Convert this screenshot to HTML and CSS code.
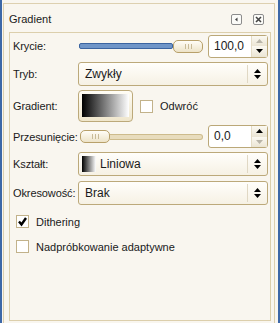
FILE: index.html
```html
<!DOCTYPE html>
<html lang="pl">
<head>
    <meta charset="UTF-8">
    <title>Gradient</title>
    <link rel="stylesheet" href="styles.css">
</head>
<body>
    <div class="window">
        <div class="dock">
            <div class="title-bar">
                <span class="title">Gradient</span>
                <span class="tab-btn">
                    <svg width="9" height="9" viewBox="0 0 9 9"><path d="M5.5 2.5 L3 4.5 L5.5 6.5 Z" fill="#444"/></svg>
                </span>
                <span class="tab-btn">
                    <svg width="9" height="9" viewBox="0 0 9 9"><path d="M2 2 L7 7 M7 2 L2 7" stroke="#444" stroke-width="1.6"/></svg>
                </span>
            </div>

            <div class="panel">
                <div class="row row-krycie">
                    <span class="label">Krycie:</span>
                    <div class="slider">
                        <div class="track blue"></div>
                        <div class="thumb"><span class="grip"></span></div>
                    </div>
                    <div class="spin">
                        <span class="spin-value">100,0</span>
                        <div class="spin-btns">
                            <span class="spin-btn off"><svg width="7" height="4" viewBox="0 0 7 4"><path d="M0 4 L3.5 0 L7 4 Z"/></svg></span>
                            <span class="spin-btn on"><svg width="7" height="4" viewBox="0 0 7 4"><path d="M0 0 L7 0 L3.5 4 Z"/></svg></span>
                        </div>
                    </div>
                </div>

                <div class="row row-tryb">
                    <span class="label">Tryb:</span>
                    <div class="combo">
                        <span class="combo-text">Zwykły</span>
                        <span class="combo-arrows">
                            <svg width="7" height="10" viewBox="0 0 7 10"><path d="M0 4 L3.5 0 L7 4 Z M0 6 L7 6 L3.5 10 Z"/></svg>
                        </span>
                    </div>
                </div>

                <div class="row row-gradient">
                    <span class="label">Gradient:</span>
                    <div class="preview"><div class="preview-fill"></div></div>
                    <span class="check"></span>
                    <span class="check-label">Odwróć</span>
                </div>

                <div class="row row-przes">
                    <span class="label">Przesunięcie:</span>
                    <div class="slider">
                        <div class="thumb left"><span class="grip"></span></div>
                        <div class="track tan"></div>
                    </div>
                    <div class="spin">
                        <span class="spin-value">0,0</span>
                        <div class="spin-btns">
                            <span class="spin-btn on"><svg width="7" height="4" viewBox="0 0 7 4"><path d="M0 4 L3.5 0 L7 4 Z"/></svg></span>
                            <span class="spin-btn off"><svg width="7" height="4" viewBox="0 0 7 4"><path d="M0 0 L7 0 L3.5 4 Z"/></svg></span>
                        </div>
                    </div>
                </div>

                <div class="row row-ksztalt">
                    <span class="label">Kształt:</span>
                    <div class="combo">
                        <span class="shape-icon"></span>
                        <span class="combo-text near">Liniowa</span>
                        <span class="combo-arrows">
                            <svg width="7" height="10" viewBox="0 0 7 10"><path d="M0 4 L3.5 0 L7 4 Z M0 6 L7 6 L3.5 10 Z"/></svg>
                        </span>
                    </div>
                </div>

                <div class="row row-okres">
                    <span class="label">Okresowość:</span>
                    <div class="combo">
                        <span class="combo-text">Brak</span>
                        <span class="combo-arrows">
                            <svg width="7" height="10" viewBox="0 0 7 10"><path d="M0 4 L3.5 0 L7 4 Z M0 6 L7 6 L3.5 10 Z"/></svg>
                        </span>
                    </div>
                </div>

                <div class="opt opt-dither">
                    <span class="check">
                        <svg width="11" height="11" viewBox="0 0 11 11"><path d="M2 5.5 L4.5 8.5 L9 2" stroke="#000" stroke-width="2.4" fill="none"/></svg>
                    </span>
                    <span class="check-label">Dithering</span>
                </div>

                <div class="opt opt-adapt">
                    <span class="check"></span>
                    <span class="check-label">Nadpróbkowanie adaptywne</span>
                </div>
            </div>
        </div>
    </div>
</body>
</html>
```

FILE: styles.css
```css
body {
    margin: 0;
    font-family: "Liberation Sans", Arial, sans-serif;
    font-size: 11px;
    color: #1a1a1a;
    background-color: #f9f6ef;
}
.window {
    height: 323px;
    border-left: 2px solid #3d68a8;
    border-right: 2px solid #3d68a8;
    padding: 3px 3px 0 1px;
    box-sizing: border-box;
    overflow: hidden;
}
.dock {
    border: 1px solid #ddd0b0;
    height: 330px;
    padding: 0 3px 0 5px;
}
.title-bar {
    display: flex;
    align-items: center;
    height: 28px;
}
.title {
    flex: 1;
    padding-top: 2px;
}
.tab-btn {
    width: 9px;
    height: 9px;
    border: 1px solid #8c8c8c;
    border-radius: 2px;
    display: flex;
    background-color: #fbfbf8;
    margin-right: 11px;
    margin-top: 2px;
}
.tab-btn:last-child {
    margin-right: 7px;
}
.panel {
    border: 1px solid #dccfac;
    height: 286px;
    padding: 1px 2px 0 3px;
}
.row {
    display: flex;
    align-items: center;
}
.label {
    width: 65px;
    flex: none;
    letter-spacing: -0.1px;
}
.row-krycie { height: 24px; }
.row-tryb { height: 24px; margin-top: 4px; }
.row-gradient { height: 32px; margin-top: 4px; }
.row-przes { height: 23px; margin-top: 3px; }
.row-ksztalt { height: 24px; margin-top: 4px; }
.row-okres { height: 24px; margin-top: 5px; }

/* sliders */
.slider {
    flex: 1;
    display: flex;
    align-items: center;
    height: 13px;
    margin-right: 5px;
}
.track {
    flex: 1;
    height: 4px;
    border-radius: 2px;
}
.track.blue {
    background-color: #6f95c8;
    border: 1px solid #3b64a0;
    margin-left: 1px;
}
.track.tan {
    background-color: #e8dcbd;
    border: 1px solid #cdbb8c;
    border-left: none;
    border-radius: 0 3px 3px 0;
}
.thumb {
    width: 28px;
    height: 11px;
    border: 1px solid #b8a06a;
    border-radius: 5px;
    background: linear-gradient(#fffdf7, #ede3c8);
    display: flex;
    align-items: center;
    justify-content: center;
}
.thumb.left {
    margin-left: 2px;
}
.grip {
    width: 7px;
    height: 5px;
    background: repeating-linear-gradient(90deg, #c9bb98 0 1px, transparent 1px 3px);
}

/* spin button */
.spin {
    width: 60px;
    height: 23px;
    border: 1px solid #bba878;
    border-radius: 3px;
    background-color: #fff;
    display: flex;
    box-sizing: border-box;
}
.spin-value {
    flex: 1;
    padding-left: 5px;
    line-height: 21px;
    font-size: 12px;
}
.spin-btns {
    width: 15px;
    display: flex;
    flex-direction: column;
    border-left: 1px solid #e4dcc6;
}
.spin-btn {
    flex: 1;
    display: flex;
    align-items: center;
    justify-content: center;
    background: linear-gradient(#fbf9f2, #ebe5d4);
}
.spin-btn.off { fill: #b8b4a8; }
.spin-btn.on { fill: #000; }

/* combo boxes */
.combo {
    flex: 1;
    height: 24px;
    border: 1px solid #bca97a;
    border-radius: 3px;
    background: linear-gradient(#fffefb, #f6f1e4);
    display: flex;
    align-items: center;
    box-sizing: border-box;
}
.combo-text {
    flex: 1;
    padding-left: 6px;
    font-size: 12px;
}
.combo-text.near {
    padding-left: 4px;
}
.combo-arrows {
    width: 19px;
    height: 18px;
    border-left: 1px solid #e0d8c4;
    display: flex;
    align-items: center;
    justify-content: center;
    fill: #000;
}
.shape-icon {
    width: 14px;
    height: 16px;
    margin-left: 3px;
    background: linear-gradient(90deg, #000, #fff);
}

/* gradient preview */
.preview {
    width: 55px;
    height: 32px;
    border: 1px solid #bca97a;
    border-radius: 4px;
    background: linear-gradient(#fffdf6, #efe6cc);
    box-sizing: border-box;
    padding: 3px 3px 4px 3px;
}
.preview-fill {
    height: 100%;
    background: linear-gradient(90deg, #000, #fff);
}

/* check boxes */
.check {
    width: 11px;
    height: 11px;
    border: 1px solid #c2b28a;
    background-color: #fff;
    display: flex;
    flex: none;
}
.row-gradient .check {
    margin-left: 7px;
}
.check-label {
    margin-left: 7px;
}
.opt {
    display: flex;
    align-items: center;
    height: 13px;
    padding-left: 3px;
}
.opt-dither { margin-top: 10px; }
.opt-adapt { margin-top: 12px; }
```
